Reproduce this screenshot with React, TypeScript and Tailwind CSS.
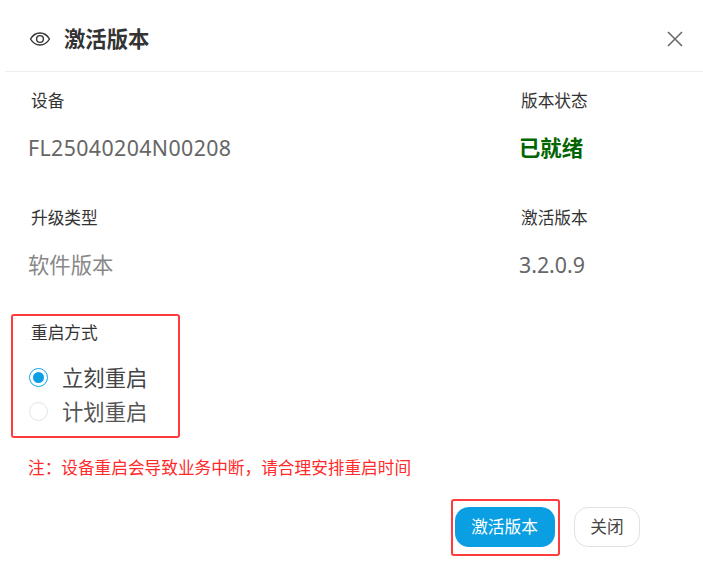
export default function App() {
  return (
    <div className="w-[703px] h-[570px] bg-white overflow-hidden font-['Noto_Sans','Noto_Sans_CJK_SC',sans-serif]">
      <header className="ml-[5px] h-[72px] border-b border-[#eeeeee] flex items-center pl-[24px] pr-[20px] pt-[6px]">
        <svg width="22" height="16" viewBox="0 0 22 16" fill="none" stroke="#333" strokeWidth="1.4" className="mr-[13px]">
          <path d="M1.5 8C4 3.8 7.2 2 11 2s7 1.800 9.500 6c-2.500 4.200-5.700 6-9.500 6S4 12.200 1.500 8z" />
          <circle cx="11" cy="8" r="3.400" />
        </svg>
        <h1 className="text-[21.33px] leading-[28px] font-bold text-[#333333]">激活版本</h1>
        <svg width="16" height="16" viewBox="0 0 16 16" fill="none" stroke="#666" strokeWidth="1.500" className="ml-auto">
          <path d="M1 1l14 14M15 1L1 15" />
        </svg>
      </header>
      <div className="grid grid-cols-[490px_1fr] pl-[29px] pt-[17px]">
        <div>
          <div className="pl-[2px] text-[16.67px] leading-[24px] text-[#333333]">设备</div>
          <div className="mt-[20px] -ml-[1px] text-[21.33px] tracking-[0.4px] leading-[30px] text-[#666666]">FL25040204N00208</div>
        </div>
        <div className="pl-[2px]">
          <div className="text-[16.67px] leading-[24px] text-[#333333]">版本状态</div>
          <div className="mt-[20px] -ml-[2px] text-[21.33px] leading-[30px] font-bold text-[#006400]">已就绪</div>
        </div>
        <div className="mt-[43px]">
          <div className="pl-[2px] text-[16.67px] leading-[24px] text-[#333333]">升级类型</div>
          <div className="mt-[20px] -ml-[1px] text-[21.33px] leading-[30px] text-[#888888]">软件版本</div>
        </div>
        <div className="mt-[43px] pl-[2px]">
          <div className="text-[16.67px] leading-[24px] text-[#333333]">激活版本</div>
          <div className="mt-[20px] -ml-[2px] text-[21.33px] leading-[30px] text-[#666666]">3.2.0.9</div>
        </div>
      </div>
      <section className="ml-[11px] mt-[34px] w-[169px] h-[124px] border-[2px] border-[#ff3b3b] rounded-[3px] pl-[16px] pt-[5px]">
        <div className="pl-[2px] text-[16.67px] leading-[24px] text-[#333333]">重启方式</div>
        <div className="mt-[20px] flex flex-col gap-[9px]">
          <label className="flex items-center h-[25px]">
            <span className="w-[19px] h-[19px] rounded-full border border-[#0ea5e9] flex items-center justify-center">
              <span className="w-[11px] h-[11px] rounded-full bg-[#0a9fe3]" />
            </span>
            <span className="ml-[14px] text-[21.33px] leading-[25px] text-[#444444]">立刻重启</span>
          </label>
          <label className="flex items-center h-[25px]">
            <span className="w-[19px] h-[19px] rounded-full border border-[#e2e4ea]" />
            <span className="ml-[14px] text-[21.33px] leading-[25px] text-[#555555]">计划重启</span>
          </label>
        </div>
      </section>
      <p className="ml-[28px] mt-[18px] text-[16.67px] leading-[24px] text-[#ff2a2a]">注：设备重启会导致业务中断，请合理安排重启时间</p>
      <div className="mt-[19px] flex items-center pl-[451px]">
        <div className="w-[109px] h-[57px] border-[2px] border-[#ff3b3b] rounded-[3px] flex items-center justify-center pr-[2px] pb-[2px]">
          <button className="w-[100px] h-[40px] rounded-[14px] bg-[#0a9fe3] text-white text-[16.67px]">激活版本</button>
        </div>
        <button className="ml-[14px] mb-[2px] w-[66px] h-[40px] rounded-[14px] border border-[#e0e2e8] bg-white text-[#444444] text-[16.67px]">关闭</button>
      </div>
    </div>
  );
}
